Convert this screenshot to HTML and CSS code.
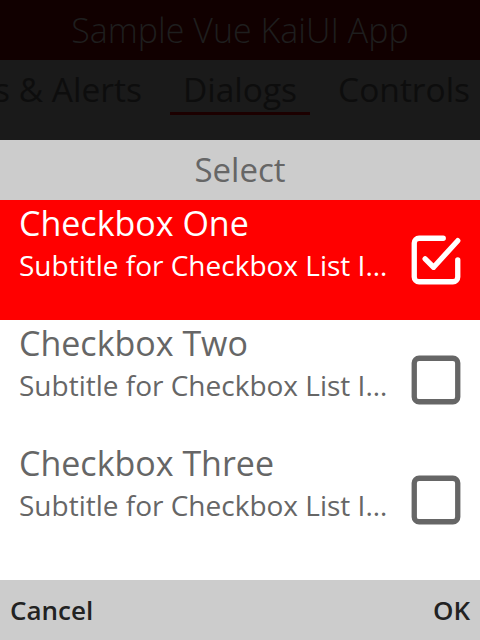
FILE: index.html
```html
<!DOCTYPE html>
<html>
<head>
<meta charset="utf-8">
<link rel="stylesheet" href="styles.css">
</head>
<body>
<div class="app">
  <header class="app-header">Sample Vue KaiUI App</header>
  <nav class="tabs">
    <div class="tabs-side tabs-left"><span class="tab">Toasts &amp; Alerts</span></div>
    <span class="tab tab-active">Dialogs</span>
    <div class="tabs-side tabs-right"><span class="tab">Controls</span></div>
  </nav>
  <section class="dialog">
    <div class="dialog-header">Select</div>
    <ul class="list">
      <li class="item item-focused">
        <div class="item-text">
          <div class="item-title">Checkbox One</div>
          <div class="item-subtitle">Subtitle for Checkbox List Item</div>
        </div>
        <svg class="item-icon" viewBox="0 0 24 24" fill="none" stroke="currentColor" stroke-width="2.2" stroke-linecap="round" stroke-linejoin="round"><path d="M7.5 11.5l3.5 3.5L21 4"/><path d="M21 12v7a2 2 0 0 1-2 2H5a2 2 0 0 1-2-2V5a2 2 0 0 1 2-2h10"/></svg>
      </li>
      <li class="item">
        <div class="item-text">
          <div class="item-title">Checkbox Two</div>
          <div class="item-subtitle">Subtitle for Checkbox List Item</div>
        </div>
        <svg class="item-icon" viewBox="0 0 24 24" fill="none" stroke="currentColor" stroke-width="2.2" stroke-linecap="round" stroke-linejoin="round"><rect x="3" y="3" width="18" height="18" rx="2"/></svg>
      </li>
      <li class="item">
        <div class="item-text">
          <div class="item-title">Checkbox Three</div>
          <div class="item-subtitle">Subtitle for Checkbox List Item</div>
        </div>
        <svg class="item-icon" viewBox="0 0 24 24" fill="none" stroke="currentColor" stroke-width="2.2" stroke-linecap="round" stroke-linejoin="round"><rect x="3" y="3" width="18" height="18" rx="2"/></svg>
      </li>
    </ul>
    <div class="dialog-spacer"></div>
    <footer class="softkeys">
      <span class="softkey">Cancel</span>
      <span class="softkey">OK</span>
    </footer>
  </section>
</div>
</body>
</html>
```
FILE: styles.css
```css
* { box-sizing: border-box; }
html, body { margin: 0; padding: 0; }
body {
  width: 480px;
  height: 640px;
  overflow: hidden;
  font-family: "Open Sans", "Noto Sans", sans-serif;
  background: #ffffff;
}
.app {
  display: flex;
  flex-direction: column;
  height: 640px;
}
.app-header {
  height: 60px;
  line-height: 60px;
  background: #110000;
  color: #1e1e1e;
  font-size: 34px;
  font-weight: 300;
  text-align: center;
  flex: none;
}
.tabs {
  height: 80px;
  background: #1a1a1a;
  display: grid;
  grid-template-columns: 1fr auto 1fr;
  align-items: start;
  padding-top: 6px;
  overflow: hidden;
  flex: none;
  column-gap: 15px;
}
.tabs-side {
  display: flex;
  overflow: hidden;
  white-space: nowrap;
}
.tabs-left { justify-content: flex-end; }
.tabs-right { justify-content: flex-start; }
.tab {
  font-size: 33.5px;
  line-height: 46px;
  color: #0d0d0d;
  padding: 0 13px;
  white-space: nowrap;
  border-bottom: 3px solid transparent;
  flex: none;
}
.tab-active {
  border-bottom-color: #1c0000;
}
.dialog {
  flex: 1;
  display: flex;
  flex-direction: column;
  background: #ffffff;
}
.dialog-header {
  height: 60px;
  line-height: 60px;
  background: #cccccc;
  color: #666666;
  font-size: 33px;
  text-align: center;
  flex: none;
}
.list {
  list-style: none;
  margin: 0;
  padding: 0;
}
.item {
  height: 120px;
  display: flex;
  align-items: center;
  padding: 0 15px 0 19px;
  gap: 15px;
  color: #666666;
}
.item-focused {
  background: #ff0000;
  color: #ffffff;
}
.item-text {
  flex: 1;
  min-width: 0;
  align-self: flex-start;
}
.item-title {
  font-size: 34px;
  line-height: 46px;
  white-space: nowrap;
}
.item-subtitle {
  font-size: 28px;
  line-height: 38px;
  white-space: nowrap;
  overflow: hidden;
  text-overflow: ellipsis;
}
.item-icon {
  width: 58px;
  height: 58px;
  flex: none;
}
.dialog-spacer {
  flex: 1;
}
.softkeys {
  height: 60px;
  background: #cccccc;
  display: flex;
  align-items: center;
  justify-content: space-between;
  padding: 0 10px 0 10px;
  flex: none;
}
.softkey {
  font-size: 26px;
  font-weight: 600;
  color: #222222;
}
```
